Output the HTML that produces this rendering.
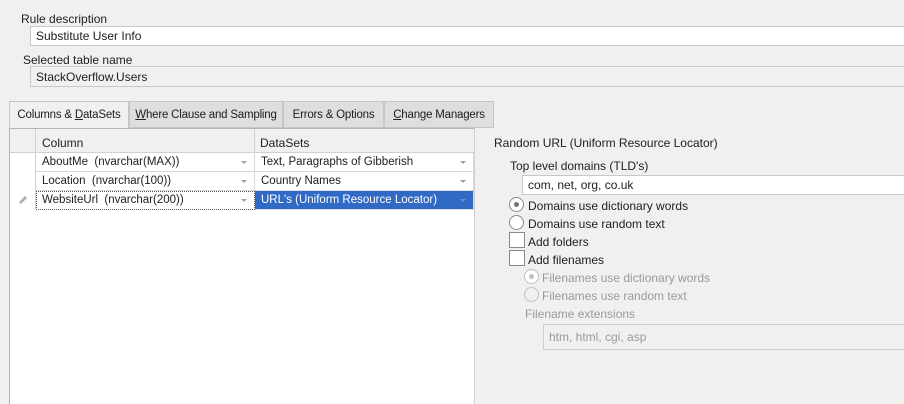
<!DOCTYPE html>
<html style="overflow:hidden;height:404px"><head><style>
*{margin:0;padding:0;box-sizing:border-box}
body{width:904px;height:404px;background:#f0f0f0;font-family:"Liberation Sans",sans-serif;font-size:12px;color:#202020;position:relative;overflow:hidden;white-space:nowrap}
.a{position:absolute;white-space:nowrap}
.inp{position:absolute;border:1px solid #c8c8c8;background:#fff;padding-left:5px;line-height:18px}
.tab{position:absolute;top:101px;height:27px;border:1px solid #c6c6c6;background:#dedede;line-height:27px;text-align:center;font-size:11.5px;letter-spacing:-0.2px;overflow:hidden}
.cell{position:absolute;height:19px;line-height:19px;padding-left:6px;border-right:1px solid #d8d8d8;border-bottom:1px solid #d8d8d8;background:#fff;font-size:11.5px}
.dd{position:absolute;right:7px;top:8px;width:0;height:0;border-left:3px solid transparent;border-right:3px solid transparent;border-top:3px solid #a0a0a0}
.rad{position:absolute;width:15px;height:15px;border:1px solid #8a8a8a;border-radius:50%;background:#fff}
.chk{position:absolute;width:16px;height:16px;border:1px solid #8a8a8a;background:#fff}
.dis{color:#9a9a9a}
</style></head><body>
<div class="a" style="left:21px;top:12px">Rule description</div>
<div class="inp" style="left:30px;top:26px;width:880px;height:20px;line-height:19px">Substitute User Info</div>
<div class="a" style="left:23px;top:53px">Selected table name</div>
<div class="inp" style="left:30px;top:66px;width:880px;height:21px;background:#f0f0f0;line-height:20px">StackOverflow.Users</div>

<div class="tab" style="left:9px;width:120px;background:#f0f0f0;border-bottom:none;height:28px">Columns &amp; <u>D</u>ataSets</div>
<div class="tab" style="left:129px;width:154px"><u>W</u>here Clause and Sampling</div>
<div class="tab" style="left:283px;width:101px">Errors &amp; Options</div>
<div class="tab" style="left:384px;width:110px"><u>C</u>hange Managers</div>

<div style="position:absolute;left:9px;top:128px;width:466px;height:280px;background:#fff;border:1px solid #b4b4b4;border-right-color:#d0d0d0;border-bottom:none"></div>
<div style="position:absolute;left:10px;top:129px;width:464px;height:24px;background:#f0f0f0;border-bottom:1px solid #d0d0d0"></div>
<div style="position:absolute;left:35px;top:129px;width:1px;height:81px;background:#d0d0d0"></div>
<div style="position:absolute;left:254px;top:129px;width:1px;height:24px;background:#d0d0d0"></div>
<div class="a" style="left:42px;top:136px">Column</div>
<div class="a" style="left:260px;top:136px">DataSets</div>

<div class="cell" style="left:36px;top:153px;width:219px">AboutMe&nbsp; (nvarchar(MAX))<span class="dd"></span></div>
<div class="cell" style="left:255px;top:153px;width:219px">Text, Paragraphs of Gibberish<span class="dd"></span></div>
<div class="cell" style="left:36px;top:172px;width:219px">Location&nbsp; (nvarchar(100))<span class="dd"></span></div>
<div class="cell" style="left:255px;top:172px;width:219px">Country Names<span class="dd"></span></div>
<div class="cell" style="left:36px;top:191px;width:219px;border:1px dotted #555;line-height:17px;padding-left:5px">WebsiteUrl&nbsp; (nvarchar(200))<span class="dd" style="top:7px"></span></div>
<div class="cell" style="left:255px;top:191px;width:219px;background:#316ac5;color:#fff">URL's (Uniform Resource Locator)<span class="dd" style="border-top-color:#6d8fd0"></span></div>
<svg class="a" style="left:17px;top:194px" width="12" height="12"><path d="M2 10 L3 7 L8 2 L10 4 L5 9 Z" fill="#b0b0b0"/></svg>

<div class="a" style="left:494px;top:136px">Random URL (Uniform Resource Locator)</div>
<div class="a" style="left:510px;top:159px">Top level domains (TLD's)</div>
<div class="inp" style="left:522px;top:175px;width:390px;height:20px;line-height:19px">com, net, org, co.uk</div>
<div class="rad" style="left:509px;top:197px"><div style="position:absolute;left:4px;top:4px;width:5px;height:5px;border-radius:50%;background:#777"></div></div>
<div class="a" style="left:528px;top:199px">Domains use dictionary words</div>
<div class="rad" style="left:509px;top:215px"></div>
<div class="a" style="left:528px;top:217px">Domains use random text</div>
<div class="chk" style="left:509px;top:232px"></div>
<div class="a" style="left:528px;top:235px">Add folders</div>
<div class="chk" style="left:509px;top:250px"></div>
<div class="a" style="left:528px;top:253px">Add filenames</div>
<div class="rad" style="left:524px;top:269px;border-color:#c0c0c0"><div style="position:absolute;left:4px;top:4px;width:5px;height:5px;border-radius:50%;background:#c0c0c0"></div></div>
<div class="a dis" style="left:542px;top:271px">Filenames use dictionary words</div>
<div class="rad" style="left:524px;top:287px;border-color:#c0c0c0;background:#f0f0f0"></div>
<div class="a dis" style="left:542px;top:289px">Filenames use random text</div>
<div class="a dis" style="left:525px;top:307px">Filename extensions</div>
<div class="inp dis" style="left:543px;top:324px;width:370px;height:26px;background:#f0f0f0;line-height:24px;border-color:#cfcfcf">htm, html, cgi, asp</div>
</body></html>
